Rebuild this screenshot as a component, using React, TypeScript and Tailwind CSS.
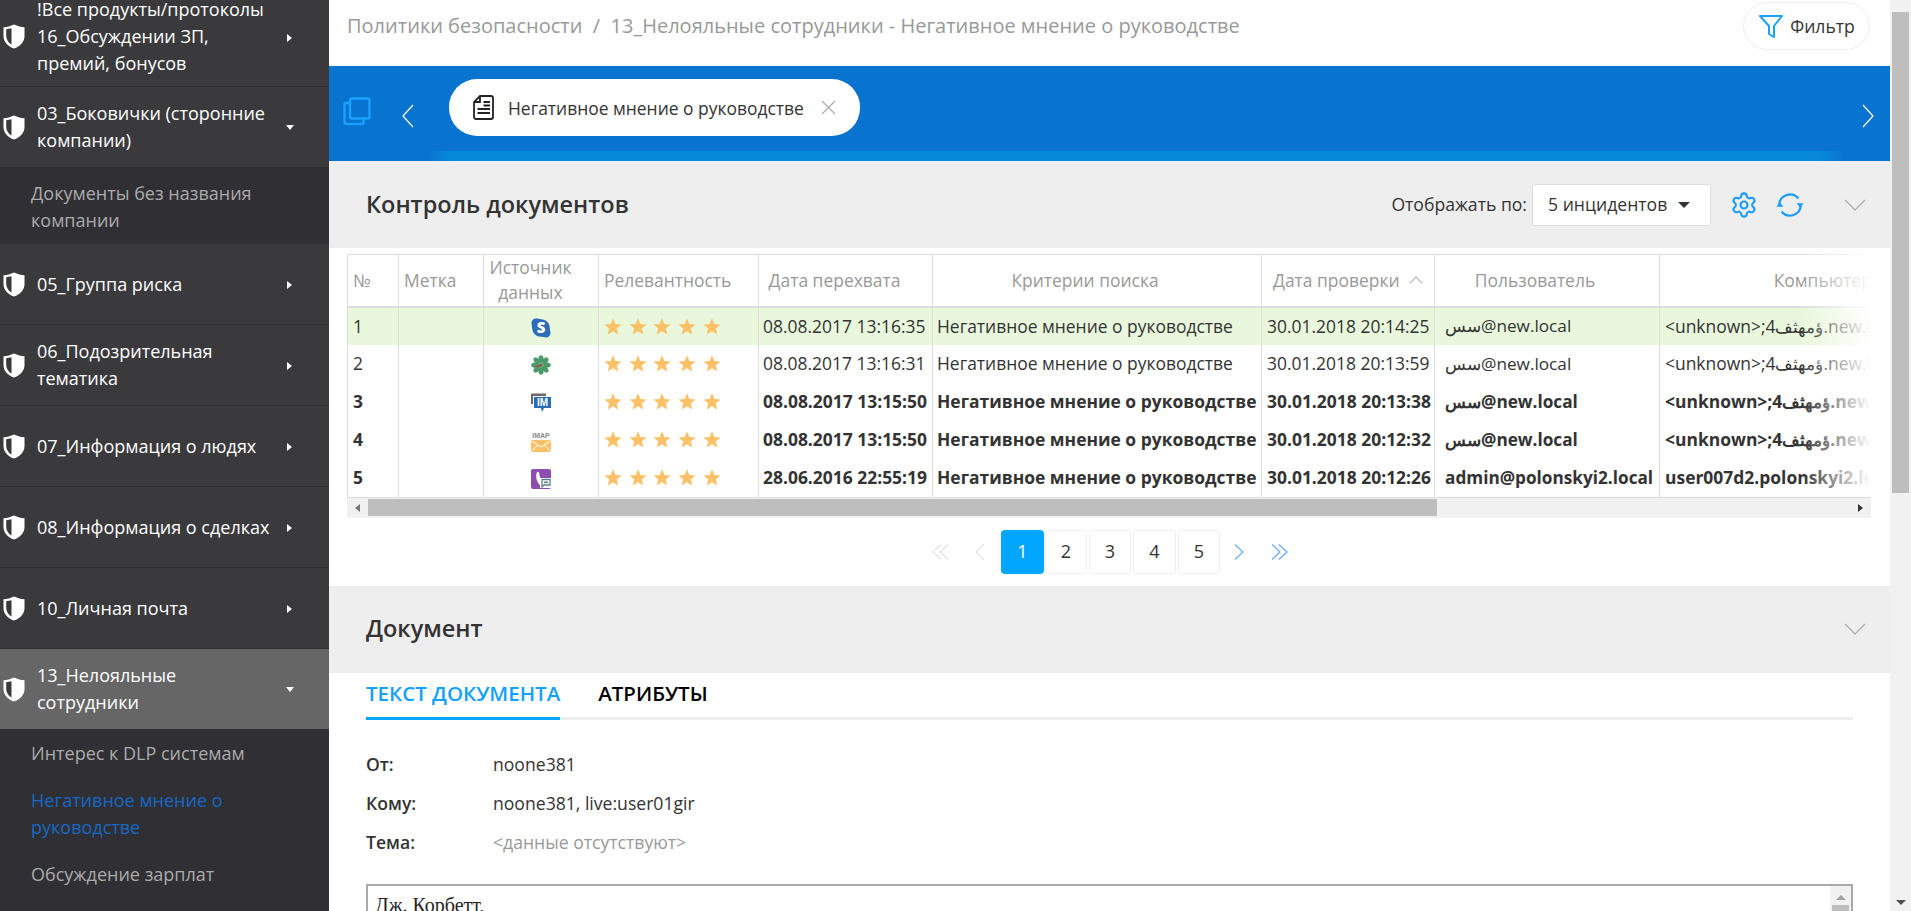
import React from "react";
import { Settings } from "lucide-react";

const Shield: React.FC = () => (
  <svg width="22" height="25" viewBox="0 0 22 25" className="shrink-0">
    <path d="M11 0.5 C14.5 2.2 18 3 21.5 3.2 V12 C21.5 18 17 22.5 11 24.5 C5 22.5 0.5 18 0.5 12 V3.2 C4 3 7.5 2.2 11 0.5 Z" fill="#fff" />
    <path d="M8.5 4.2 C6.7 4.7 4.9 5 3.2 5.2 V12 C3.2 15.5 5.2 18.6 8.5 20.6 Z" fill="#3a3a3d" />
  </svg>
);

const Thin: React.FC<{ points: string; w: number; h: number; color: string }> = ({ points, w, h, color }) => (
  <svg width={w} height={h} viewBox={`0 0 ${w} ${h}`} fill="none" stroke={color} strokeWidth="1.2" className="shrink-0">
    <polyline points={points} />
  </svg>
);

const SideItem: React.FC<{ lines: string; open?: boolean; active?: boolean; first?: boolean }> = ({ lines, open, active, first }) => (
  <div
    className={`flex items-center pl-[3px] border-b border-[#2f2f31] ${first ? "h-[100px]" : "h-[81px]"} ${active ? "bg-[#666666]" : ""}`}
  >
    <Shield />
    <div className="ml-[12px] w-[241px] text-[18px] leading-[27px] text-white whitespace-pre-line">{lines}</div>
    <div className="ml-[8px]">
      {open ? (
        <div className="w-0 h-0 border-x-[4px] border-x-transparent border-t-[5px] border-t-white" />
      ) : (
        <div className="w-0 h-0 ml-[1px] mt-[2px] border-y-[4px] border-y-transparent border-l-[5px] border-l-white" />
      )}
    </div>
  </div>
);

const SubItem: React.FC<{ text: string; current?: boolean }> = ({ text, current }) => (
  <div className={`pl-[31px] pr-[20px] py-[10px] text-[18px] leading-[27px] whitespace-pre-line ${current ? "text-[#1668c4]" : "text-[#ababab]"}`}>
    {text}
  </div>
);

const Sidebar: React.FC = () => (
  <aside className="w-[329px] shrink-0 h-full overflow-hidden bg-[#3a3a3d]">
    <div className="-mt-[13px]">
      <SideItem first lines={"!Все продукты/протоколы\n16_Обсуждении ЗП,\nпремий, бонусов"} />
      <SideItem open lines={"03_Боковички (сторонние\nкомпании)"} />
      <div className="bg-[#2f2f34] pt-[2px]">
        <SubItem text={"Документы без названия\nкомпании"} />
      </div>
      <SideItem lines="05_Группа риска" />
      <SideItem lines={"06_Подозрительная\nтематика"} />
      <SideItem lines="07_Информация о людях" />
      <SideItem lines="08_Информация о сделках" />
      <SideItem lines="10_Личная почта" />
      <SideItem active open lines={"13_Нелояльные\nсотрудники"} />
      <div className="bg-[#2f2f34] h-[200px]">
        <SubItem text="Интерес к DLP системам" />
        <SubItem current text={"Негативное мнение о\nруководстве"} />
        <SubItem text="Обсуждение зарплат" />
      </div>
    </div>
  </aside>
);

const Star: React.FC = () => (
  <svg width="18" height="17" viewBox="0 0 24 23" className="shrink-0">
    <polygon points="12,0.5 15.2,8.2 23.5,8.8 17.1,14.1 19.2,22.3 12,17.8 4.8,22.3 6.9,14.1 0.5,8.8 8.8,8.2" fill="#fbc169" />
  </svg>
);

const SkypeIcon = () => (
  <svg width="20" height="20" viewBox="0 0 20 20">
    <path d="M5 0.5 C7 0.5 8 1.2 10 1.2 C15 1.2 18.8 5 18.8 10 C18.8 12 19.5 13 19.5 15 A4.5 4.5 0 0 1 15 19.5 C13 19.5 12 18.8 10 18.8 C5 18.8 1.2 15 1.2 10 C1.2 8 0.5 7 0.5 5 A4.5 4.5 0 0 1 5 0.5Z" fill="#2c6cb8" />
    <text x="10" y="15" textAnchor="middle" fontSize="15" fontWeight="800" fill="#fff" fontFamily="Open Sans, sans-serif">S</text>
  </svg>
);

const IcqIcon = () => (
  <svg width="20" height="20" viewBox="0 0 20 20">
    {[0, 45, 90, 135, 180, 225, 270, 315].map((a) => (
      <ellipse key={a} cx="10" cy="4" rx="2.6" ry="3.8" fill="#4c9a6c" transform={`rotate(${a} 10 10)`} />
    ))}
    <circle cx="10" cy="10" r="3" fill="#5aa97a" />
    <path d="M2.5 12.5 L10 9 L11 11 Z" fill="#c0392b" />
  </svg>
);

const ImIcon = () => (
  <svg width="20" height="20" viewBox="0 0 20 20">
    <path d="M0 0.5 H15 V3 H2 V11 H0 Z" fill="#6a6a6a" />
    <path d="M3 4 H20 V15 H13 L11 19 L10 15 H3 Z" fill="#2a6cb5" />
    <text x="11.5" y="13" textAnchor="middle" fontSize="10" fontWeight="700" fill="#fff" fontFamily="Liberation Sans, sans-serif">IM</text>
  </svg>
);

const ImapIcon = () => (
  <svg width="20" height="21" viewBox="0 0 20 21">
    <text x="10" y="6.5" textAnchor="middle" fontSize="7" fontWeight="700" fill="#8a8a8a" fontFamily="Liberation Sans, sans-serif">IMAP</text>
    <rect x="0" y="9" width="20" height="12" fill="#fbc169" />
    <path d="M0 9.5 L10 16 L20 9.5 M0 20.5 L7 14 M20 20.5 L13 14" stroke="#fff" strokeWidth="1" fill="none" />
  </svg>
);

const ViberIcon = () => (
  <svg width="20" height="20" viewBox="0 0 20 20">
    <rect x="0" y="0" width="20" height="20" rx="2" fill="#8e4db0" />
    <path d="M6 3 C7.5 2 8.5 4 8.5 6 C8.5 8 10 10 12 11 L10 17 C6 14 4 8 6 3Z" fill="#fff" />
    <rect x="9" y="9" width="11" height="10" fill="#fff" />
    <path d="M11 10.5 H19 V16 H13 L11 18 Z" fill="none" stroke="#5c7f8c" strokeWidth="1.3" />
    <rect x="13" y="12.5" width="4" height="1.6" fill="#5c7f8c" />
  </svg>
);

interface Row {
  n: number;
  icon: React.ReactNode;
  caught: string;
  checked: string;
  user: string;
  pc: string;
  bold?: boolean;
  hl?: boolean;
}

const arabUser = "سس@new.local";
const arabPc = "<unknown>;4ؤمهثف.new.local";

const rows: Row[] = [
  { n: 1, icon: <SkypeIcon />, caught: "08.08.2017 13:16:35", checked: "30.01.2018 20:14:25", user: arabUser, pc: arabPc, hl: true },
  { n: 2, icon: <IcqIcon />, caught: "08.08.2017 13:16:31", checked: "30.01.2018 20:13:59", user: arabUser, pc: arabPc },
  { n: 3, icon: <ImIcon />, caught: "08.08.2017 13:15:50", checked: "30.01.2018 20:13:38", user: arabUser, pc: arabPc, bold: true },
  { n: 4, icon: <ImapIcon />, caught: "08.08.2017 13:15:50", checked: "30.01.2018 20:12:32", user: arabUser, pc: arabPc, bold: true },
  { n: 5, icon: <ViberIcon />, caught: "28.06.2016 22:55:19", checked: "30.01.2018 20:12:26", user: "admin@polonskyi2.local", pc: "user007d2.polonskyi2.local", bold: true },
];

const thClass = "border-l border-[#dddddd] font-normal text-[#999999] leading-[25px] pl-[5px]";
const tdClass = "border-l border-[#dddddd] px-[5px] whitespace-nowrap overflow-hidden";

const DocTable: React.FC = () => (
  <div className="relative mx-[18px] mt-[6px] w-[1524px] overflow-hidden">
    <table className="table-fixed w-[1662px] border-collapse text-[17.45px] text-[#333333] border-t border-[#dddddd]">
      <colgroup>
        <col className="w-[51px]" />
        <col className="w-[85px]" />
        <col className="w-[115px]" />
        <col className="w-[160px]" />
        <col className="w-[174px]" />
        <col className="w-[329px]" />
        <col className="w-[173px]" />
        <col className="w-[225px]" />
        <col className="w-[350px]" />
      </colgroup>
      <thead>
        <tr className="h-[52px] border-b-2 border-[#dddddd]">
          <th className={`${thClass} text-left`}>№</th>
          <th className={`${thClass} text-left`}>Метка</th>
          <th className={`${thClass} text-center pr-[26px]`}>Источник данных</th>
          <th className={`${thClass} text-left`}>Релевантность</th>
          <th className={`${thClass} text-center pr-[27px]`}>Дата перехвата</th>
          <th className={`${thClass} text-center pr-[29px]`}>Критерии поиска</th>
          <th className={`${thClass} text-left pl-[11px]`}>
            <span className="inline-flex items-center gap-[9px]">
              Дата проверки
              <Thin w={14} h={8} color="#bbbbbb" points="1,7 7,1 13,7" />
            </span>
          </th>
          <th className={`${thClass} text-center pr-[29px]`}>Пользователь</th>
          <th className={`${thClass} text-center pr-[29px]`}>Компьютер</th>
        </tr>
      </thead>
      <tbody>
        {rows.map((r) => (
          <tr key={r.n} className={`h-[38px] ${r.hl ? "bg-[#e9f8dc]" : ""} ${r.bold ? "font-bold" : ""}`}>
            <td className={tdClass}>{r.n}</td>
            <td className={tdClass} />
            <td className={tdClass}>
              <div className="flex justify-center pt-[3px]">{r.icon}</div>
            </td>
            <td className={tdClass}>
              <div className="flex gap-[6.67px]">
                <Star />
                <Star />
                <Star />
                <Star />
                <Star />
              </div>
            </td>
            <td className={`${tdClass} pl-[4px]`}>{r.caught}</td>
            <td className={`${tdClass} pl-[4px]`}>Негативное мнение о руководстве</td>
            <td className={tdClass}>{r.checked}</td>
            <td className={`${tdClass} pl-[10px] text-[17.2px]`}>{r.user}</td>
            <td className={tdClass}>{r.pc}</td>
          </tr>
        ))}
      </tbody>
    </table>
    <div className="absolute right-0 top-0 bottom-[21px] w-[70px] bg-gradient-to-r from-white/0 to-white" />
    <div className="h-[21px] bg-[#f1f1f1] border-t border-[#dddddd] flex items-center">
      <div className="w-[21px] flex justify-center">
        <div className="w-0 h-0 border-y-[4px] border-y-transparent border-r-[5px] border-r-[#777777]" />
      </div>
      <div className="w-[1069px] h-[17px] bg-[#bebebe]" />
      <div className="flex-1 flex justify-end pr-[8px]">
        <div className="w-0 h-0 border-y-[4px] border-y-transparent border-l-[5px] border-l-[#333333]" />
      </div>
    </div>
  </div>
);

const PageBox: React.FC<{ n: number; active?: boolean; w: string }> = ({ n, active, w }) => (
  <div
    className={`h-[44px] ${w} flex items-center justify-center rounded-[4px] text-[18px] ${
      active ? "bg-[#00a6ff] text-white" : "border border-[#eeeeee] text-[#333333]"
    }`}
  >
    {n}
  </div>
);

const Pagination: React.FC = () => (
  <div className="h-[68px] flex items-center">
    <div className="ml-[603px] flex items-center">
      <svg width="18" height="16" viewBox="0 0 18 16" fill="none" stroke="#e3e3e3" strokeWidth="1.2">
        <polyline points="9,0.5 1,8 9,15.5" />
        <polyline points="16,0.5 8,8 16,15.5" />
      </svg>
      <div className="ml-[25px] mr-[16px]">
        <Thin w={10} h={16} color="#e3e3e3" points="9,0.5 1,8 9,15.5" />
      </div>
      <PageBox n={1} active w="w-[43px]" />
      <div className="ml-[1px] flex gap-[2px]">
        <PageBox n={2} w="w-[42px]" />
        <PageBox n={3} w="w-[42px]" />
        <PageBox n={4} w="w-[43px]" />
        <PageBox n={5} w="w-[42px]" />
      </div>
      <div className="ml-[14px]">
        <Thin w={10} h={16} color="#6aa8ff" points="1,0.5 9,8 1,15.5" />
      </div>
      <svg className="ml-[26px]" width="18" height="16" viewBox="0 0 18 16" fill="none" stroke="#6aa8ff" strokeWidth="1.2">
        <polyline points="2,0.5 10,8 2,15.5" />
        <polyline points="9,0.5 17,8 9,15.5" />
      </svg>
    </div>
  </div>
);

const Field: React.FC<{ label: string; muted?: boolean; children: React.ReactNode }> = ({ label, muted, children }) => (
  <div className="flex h-[39px] items-center text-[17.6px]">
    <div className="w-[127px] font-semibold text-[#333333]">{label}</div>
    <div className={muted ? "text-[#999999]" : "text-[#333333]"}>{children}</div>
  </div>
);

const Main: React.FC = () => (
  <main className="flex-1 min-w-0 h-full overflow-hidden bg-white">
    <div className="h-[66px] flex items-start justify-between pl-[18px] pr-[20px]">
      <div className="mt-[10px] text-[20px] leading-[32px] text-[#999999] whitespace-pre">
        {"Политики безопасности  /  13_Нелояльные сотрудники - Негативное мнение о руководстве"}
      </div>
      <button className="mt-[2px] w-[127px] h-[48px] rounded-[24px] border border-[#eeeeee] flex items-center justify-center gap-[6px] text-[17.6px] text-[#333333]">
        <svg width="26" height="25" viewBox="0 0 26 25" fill="none" stroke="#1da1ff" strokeWidth="2">
          <path d="M2 2 H24 L16 12 V23 L11 20 V12 Z" strokeLinejoin="round" />
        </svg>
        Фильтр
      </button>
    </div>

    <div className="relative h-[95px] bg-[#0974d0] flex items-start">
      <svg className="ml-[14px] mt-[31px]" width="28" height="29" viewBox="0 0 28 29" fill="none" stroke="#1aa0ff" strokeWidth="2.4">
        <rect x="7" y="1.5" width="19.5" height="20" rx="2" />
        <path d="M7 6 H3 A1.5 1.5 0 0 0 1.5 7.5 V25 A2 2 0 0 0 3.5 27 H19 A1.5 1.5 0 0 0 20.5 25.5 V22" />
      </svg>
      <div className="ml-[31px] mt-[38px]">
        <Thin w={12} h={24} color="#ffffff" points="11,1 1,12 11,23" />
      </div>
      <div className="ml-[35px] mt-[13px] w-[411px] h-[57px] rounded-[28px] bg-white flex items-center pl-[24px] text-[17.45px] text-[#333333]">
        <svg className="shrink-0" width="21" height="25" viewBox="0 0 21 25" fill="none" stroke="#222222" strokeWidth="1.8">
          <path d="M7 1 H18 A2 2 0 0 1 20 3 V22 A2 2 0 0 1 18 24 H3 A2 2 0 0 1 1 22 V7 Z M7 1 V7 H1" />
          <path d="M10.5 7 H17 M10.5 10.5 H17 M4.5 14 H17 M4.5 18 H17" strokeWidth="2" />
        </svg>
        <span className="ml-[14px] pt-[1px] whitespace-nowrap">Негативное мнение о руководстве</span>
        <div className="ml-[17px]">
          <Thin w={15} h={15} color="#aaaaaa" points="1,1 14,14 7.5,7.5 14,1 1,14" />
        </div>
      </div>
      <div className="ml-auto mr-[16px] mt-[38px]">
        <Thin w={12} h={24} color="#ffffff" points="1,1 11,12 1,23" />
      </div>
      <div className="absolute left-[100px] right-[46px] bottom-0 h-[10px] bg-[linear-gradient(to_right,transparent,#0789da_22px,#0789da_calc(100%-25px),transparent)]" />
    </div>

    <div className="h-[87px] bg-[#eeeeee] flex items-center pl-[37px] pr-[24px]">
      <h2 className="text-[23.5px] font-semibold text-[#333333]">Контроль документов</h2>
      <span className="ml-auto text-[17.6px] text-[#333333]">Отображать по:</span>
      <div className="ml-[5px] w-[179px] h-[42px] rounded-[3px] bg-white border border-[#dddddd] flex items-center pl-[15px] pr-[20px] text-[17.6px] text-[#333333]">
        5 инцидентов
        <div className="ml-auto w-0 h-0 border-x-[6px] border-x-transparent border-t-[6px] border-t-[#333333]" />
      </div>
      <Settings className="ml-[19px]" size={28} color="#1a9cff" strokeWidth={1.8} />
      <svg className="ml-[18px]" width="28" height="28" viewBox="0 0 30 30" fill="none" stroke="#1a9cff" strokeWidth="2.4">
        <path d="M3.5 15 A11.5 11.5 0 0 1 24 8" />
        <path d="M26.5 15 A11.5 11.5 0 0 1 6 22" />
        <path d="M22 13 L29.5 13 L26 18 Z M0.5 17 L8 17 L4 12 Z" fill="#1a9cff" stroke="none" />
      </svg>
      <div className="ml-[40px]">
        <Thin w={22} h={12} color="#aaaaaa" points="1,1 11,11 21,1" />
      </div>
    </div>

    <DocTable />
    <Pagination />

    <div className="h-[87px] bg-[#eeeeee] flex items-center pl-[37px] pr-[24px]">
      <h2 className="text-[23.5px] font-semibold text-[#333333]">Документ</h2>
      <div className="ml-auto">
        <Thin w={22} h={12} color="#aaaaaa" points="1,1 11,11 21,1" />
      </div>
    </div>

    <div className="mx-[37px]">
      <div className="flex h-[47px] items-start border-b-[3px] border-[#eeeeee] text-[20.5px] font-semibold">
        <div className="h-[47px] pt-[5px] whitespace-nowrap text-[#12a0ff] border-b-[3px] border-[#00a6ff]">ТЕКСТ ДОКУМЕНТА</div>
        <div className="ml-[38px] pt-[5px] text-black">АТРИБУТЫ</div>
      </div>
      <div className="mt-[25px]">
        <Field label="От:">noone381</Field>
        <Field label="Кому:">noone381, live:user01gir</Field>
        <Field label="Тема:" muted>{"<данные отсутствуют>"}</Field>
      </div>
      <div className="mt-[22px] h-[60px] border-2 border-[#aaaaaa] flex">
        <div className="flex-1 pl-[7px] pt-[4px] text-[20px] font-['Liberation_Serif',serif] text-[#222222]">Дж. Корбетт,</div>
        <div className="w-[21px] bg-[#f1f1f1] flex flex-col items-center pt-[9px]">
          <div className="w-0 h-0 border-x-[5px] border-x-transparent border-b-[5px] border-b-[#a3a3a3]" />
          <div className="mt-[5px] w-[17px] h-[20px] bg-[#bebebe]" />
        </div>
      </div>
    </div>
  </main>
);

const PageScrollbar: React.FC = () => (
  <div className="w-[21px] shrink-0 h-full bg-[#f1f1f1] flex flex-col items-center">
    <div className="mt-[12px] h-[481px] w-[17px] bg-[#bebebe]" />
    <div className="mt-auto mb-[6px] w-0 h-0 border-x-[5px] border-x-transparent border-t-[5px] border-t-[#505050]" />
  </div>
);

const App: React.FC = () => (
  <div className="flex w-[1911px] h-[911px] overflow-hidden bg-white font-['Open_Sans',sans-serif]">
    <Sidebar />
    <Main />
    <PageScrollbar />
  </div>
);

export default App;
